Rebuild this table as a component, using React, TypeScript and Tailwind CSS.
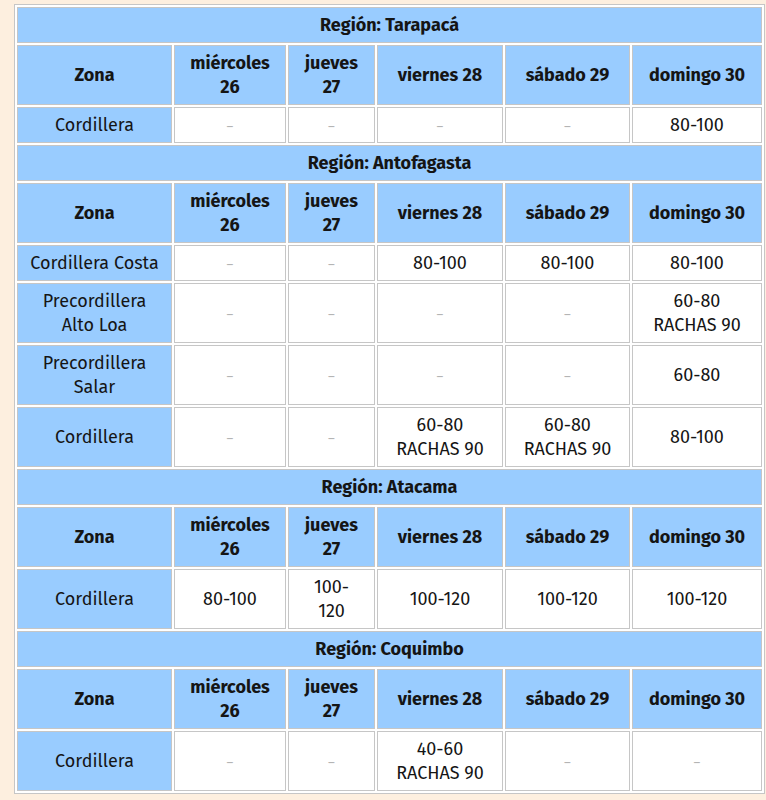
import React from "react";

type Cell = string[] | null;

interface Region {
  name: string;
  rows: { zona: string[]; values: Cell[] }[];
}

const days: string[][] = [
  ["miércoles", "26"],
  ["jueves", "27"],
  ["viernes 28"],
  ["sábado 29"],
  ["domingo 30"],
];

const regions: Region[] = [
  {
    name: "Región: Tarapacá",
    rows: [{ zona: ["Cordillera"], values: [null, null, null, null, ["80-100"]] }],
  },
  {
    name: "Región: Antofagasta",
    rows: [
      { zona: ["Cordillera Costa"], values: [null, null, ["80-100"], ["80-100"], ["80-100"]] },
      { zona: ["Precordillera", "Alto Loa"], values: [null, null, null, null, ["60-80", "RACHAS 90"]] },
      { zona: ["Precordillera", "Salar"], values: [null, null, null, null, ["60-80"]] },
      {
        zona: ["Cordillera"],
        values: [null, null, ["60-80", "RACHAS 90"], ["60-80", "RACHAS 90"], ["80-100"]],
      },
    ],
  },
  {
    name: "Región: Atacama",
    rows: [
      {
        zona: ["Cordillera"],
        values: [["80-100"], ["100-", "120"], ["100-120"], ["100-120"], ["100-120"]],
      },
    ],
  },
  {
    name: "Región: Coquimbo",
    rows: [{ zona: ["Cordillera"], values: [null, null, ["40-60", "RACHAS 90"], null, null] }],
  },
];

const cellBase = "border border-[#c6c6c6] px-1 py-[5px] text-center align-middle leading-6";

function Lines({ lines }: { lines: string[] }) {
  return (
    <>
      {lines.map((l, i) => (
        <React.Fragment key={i}>
          {i > 0 && <br />}
          {l}
        </React.Fragment>
      ))}
    </>
  );
}

export default function App() {
  return (
    <div className="min-h-[800px] bg-[#fdefdf] pt-[4px] pl-[14px] font-['Fira_Sans','Lato','Liberation_Sans',sans-serif] text-[18px] text-[#151515]">
      <table className="w-[751px] table-fixed border-separate border-spacing-[2px] border border-[#c6c6c6] bg-white">
        <colgroup>
          <col className="w-[155px]" />
          <col className="w-[112px]" />
          <col className="w-[87px]" />
          <col className="w-[126px]" />
          <col className="w-[125px]" />
          <col className="w-[130px]" />
        </colgroup>
        <tbody>
          {regions.map((region) => (
            <React.Fragment key={region.name}>
              <tr>
                <th colSpan={6} className={`${cellBase} bg-[#99ccff] font-bold`}>
                  {region.name}
                </th>
              </tr>
              <tr>
                <th className={`${cellBase} bg-[#99ccff] font-bold`}>Zona</th>
                {days.map((d, i) => (
                  <th key={i} className={`${cellBase} bg-[#99ccff] font-bold`}>
                    <Lines lines={d} />
                  </th>
                ))}
              </tr>
              {region.rows.map((row, ri) => (
                <tr key={ri}>
                  <td className={`${cellBase} bg-[#99ccff]`}>
                    <Lines lines={row.zona} />
                  </td>
                  {row.values.map((v, vi) => (
                    <td key={vi} className={`${cellBase} bg-white`}>
                      {v ? (
                        <Lines lines={v} />
                      ) : (
                        <span className="align-middle text-[13px] leading-none text-[#b4b4b4]">–</span>
                      )}
                    </td>
                  ))}
                </tr>
              ))}
            </React.Fragment>
          ))}
        </tbody>
      </table>
    </div>
  );
}
